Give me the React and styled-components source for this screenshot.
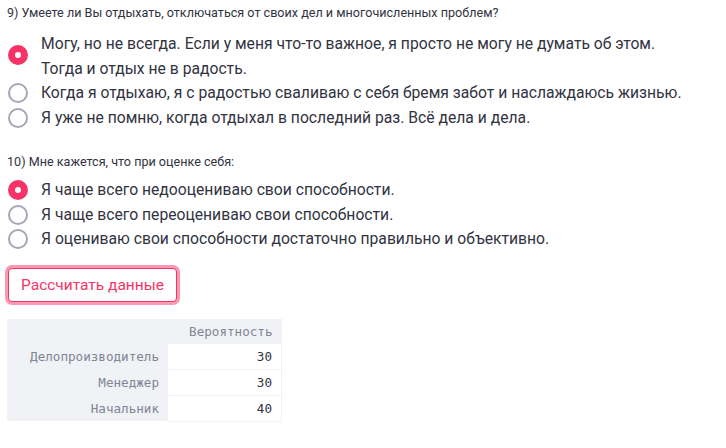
import React, { useState } from 'react';
import styled, { createGlobalStyle } from 'styled-components';

const GlobalStyle = createGlobalStyle`
	body {
		margin: 0;
		background: #fff;
		font-family: Roboto, "Noto Sans", sans-serif;
		color: #31333f;
	}
`;

const questions = [
	{
		title: '9) Умеете ли Вы отдыхать, отключаться от своих дел и многочисленных проблем?',
		options: [
			['Могу, но не всегда. Если у меня что-то важное, я просто не могу не думать об этом.', 'Тогда и отдых не в радость.'],
			['Когда я отдыхаю, я с радостью сваливаю с себя бремя забот и наслаждаюсь жизнью.'],
			['Я уже не помню, когда отдыхал в последний раз. Всё дела и дела.'],
		],
	},
	{
		title: '10) Мне кажется, что при оценке себя:',
		options: [
			['Я чаще всего недооцениваю свои способности.'],
			['Я чаще всего переоцениваю свои способности.'],
			['Я оцениваю свои способности достаточно правильно и объективно.'],
		],
	},
];

const results = [
	{ name: 'Делопроизводитель', value: 30 },
	{ name: 'Менеджер', value: 30 },
	{ name: 'Начальник', value: 40 },
];

const App = () => {
	const [answers, setAnswers] = useState([0, 0]);

	const choose = (q, i) => {
		setAnswers((prev) => prev.map((a, idx) => (idx === q ? i : a)));
	};

	return (
		<Page>
			<GlobalStyle />
			<Questions>
				{questions.map((q, qi) => (
					<div key={qi}>
						<QuestionTitle>{q.title}</QuestionTitle>
						<Options>
							{q.options.map((lines, i) => (
								<Option key={i} onClick={() => choose(qi, i)}>
									<Radio $checked={answers[qi] === i} />
									<OptionText $multi={lines.length > 1}>
										{lines.map((line, li) => (
											<React.Fragment key={li}>
												{li > 0 && <br />}
												{line}
											</React.Fragment>
										))}
									</OptionText>
								</Option>
							))}
						</Options>
					</div>
				))}
			</Questions>
			<Button>Рассчитать данные</Button>
			<Table>
				<thead>
					<tr>
						<HeadCell />
						<HeadCell>Вероятность</HeadCell>
					</tr>
				</thead>
				<tbody>
					{results.map((r) => (
						<tr key={r.name}>
							<IndexCell>{r.name}</IndexCell>
							<DataCell>{r.value}</DataCell>
						</tr>
					))}
				</tbody>
			</Table>
		</Page>
	);
};

export default App;

const Page = styled.div`
	padding: 3px 7px 20px;
`;

const Questions = styled.div`
	display: flex;
	flex-direction: column;
	gap: 22px;
`;

const QuestionTitle = styled.div`
	font-size: 12.6px;
	line-height: 20px;
	margin-bottom: 6px;
`;

const Options = styled.div`
	display: flex;
	flex-direction: column;
`;

const Option = styled.label`
	display: flex;
	align-items: center;
	gap: 13px;
	cursor: pointer;
`;

const Radio = styled.span`
	flex: none;
	box-sizing: border-box;
	width: 20px;
	height: 20px;
	margin-left: 1px;
	border-radius: 50%;
	border: ${(p) => (p.$checked ? '7px solid #f63366' : '2px solid #a3a8b8')};
	background: #fff;
`;

const OptionText = styled.span`
	font-size: 15.7px;
	line-height: 24.5px;
	padding-top: ${(p) => (p.$multi ? '3px' : '0')};
`;

const Button = styled.button`
	display: block;
	margin: 16px 0 17px 1px;
	padding: 0 12px;
	height: 34px;
	font-family: Roboto, "Noto Sans", sans-serif;
	font-size: 15.5px;
	color: #f63366;
	background: #fff;
	border: 1px solid #f63366;
	border-radius: 4px;
	box-shadow: 0 0 0 3px rgba(246, 51, 102, 0.5);
`;

const Table = styled.table`
	border-collapse: collapse;
	font-family: "DejaVu Sans Mono", monospace;
	font-size: 12.6px;
`;

const HeadCell = styled.th`
	background: #f0f2f6;
	color: #808495;
	font-weight: normal;
	text-align: right;
	height: 25px;
	padding: 0 9px 0 10px;
`;

const IndexCell = styled.th`
	background: #f0f2f6;
	color: #808495;
	font-weight: normal;
	text-align: right;
	height: 25px;
	width: 142px;
	padding: 0 9px 0 10px;
`;

const DataCell = styled.td`
	text-align: right;
	height: 25px;
	width: 94px;
	padding: 0 9px 0 10px;
	color: #31333f;
	border-right: 1px solid #f0f2f6;
	border-bottom: 1px solid #f0f2f6;
`;
